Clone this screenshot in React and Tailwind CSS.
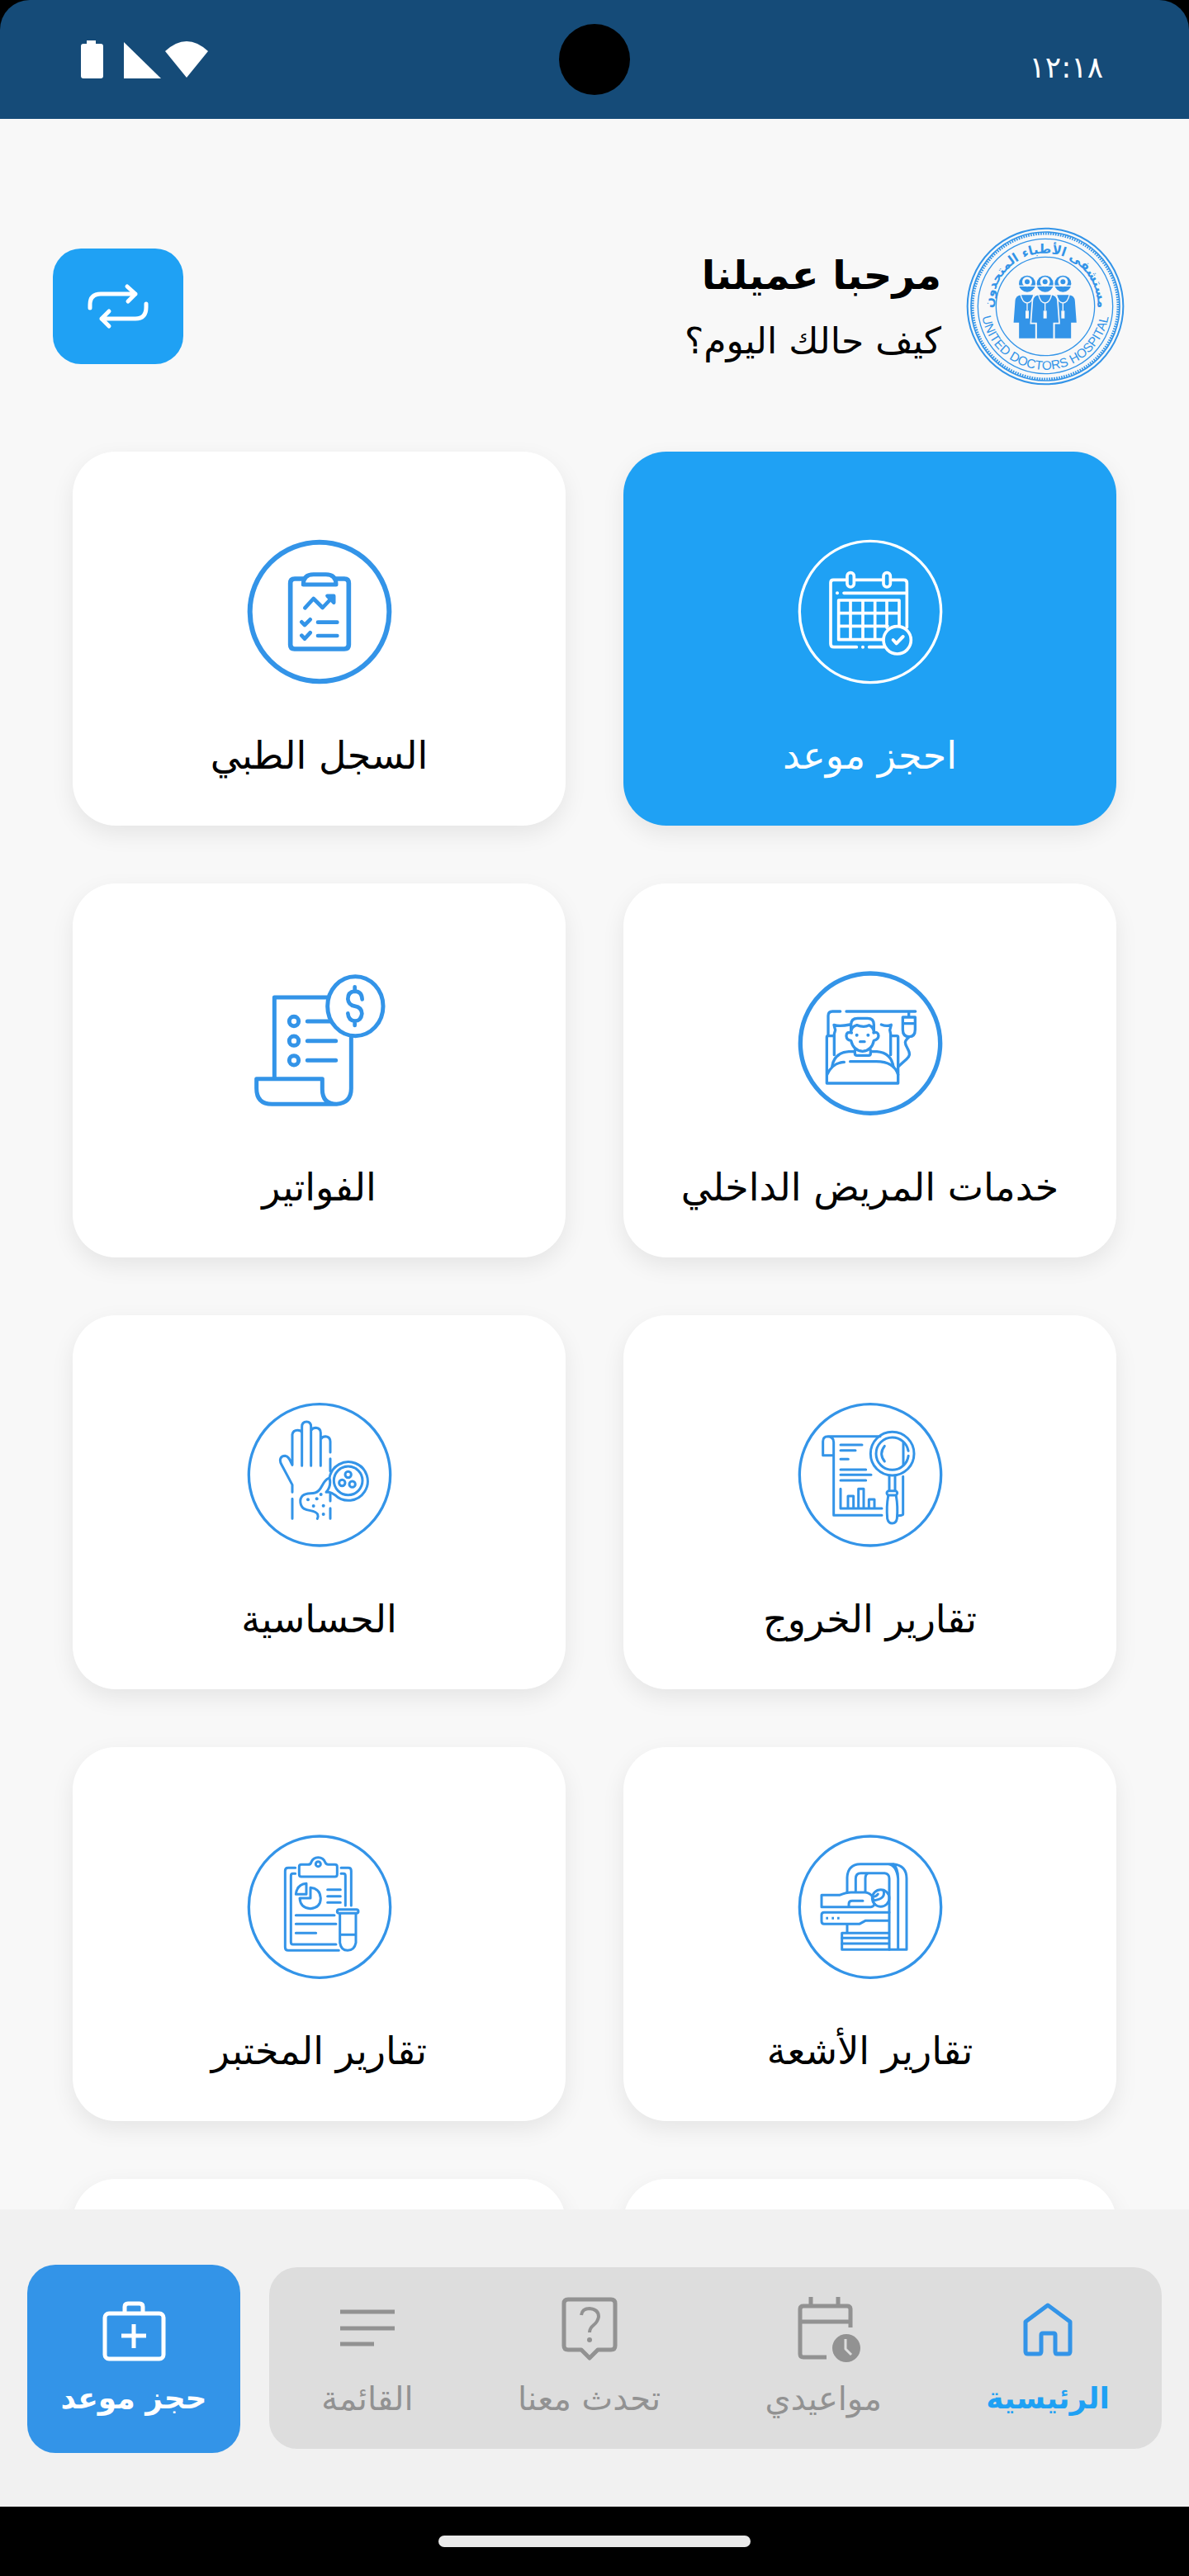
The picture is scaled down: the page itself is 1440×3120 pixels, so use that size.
import React from 'react';
import clsx from 'clsx';

const LineIcon = ({ viewBox, ring = 9, cx = 342, cy, stroke = 9, children }) => (
  <svg
    viewBox={viewBox}
    className="w-44 h-44"
    fill="none"
    stroke="currentColor"
    strokeWidth={stroke}
    strokeLinecap="round"
    strokeLinejoin="round"
    aria-hidden="true"
  >
    {cy && <circle cx={cx} cy={cy} r={262 - ring / 2} strokeWidth={ring} />}
    {children}
  </svg>
);

const BookingIcon = () => (
  <LineIcon viewBox="78 68 528 528" cy={332} ring={10} stroke={11}>
    <path d="M254 216H208Q198 216 198 226V448Q198 460 210 460H292M338 460H390M288 216H385M420 216H464Q475 216 475 227V388M246 264H474" />
    <rect x="258" y="190" width="25" height="52" rx="12" />
    <rect x="390" y="190" width="25" height="52" rx="12" />
    <path d="M388 433H227V290H447V380M227 337H447M227 384H405M270 290V433M315 290V433M359 290V433M402 290V390" />
    <circle cx="440" cy="435" r="50" />
    <path d="M425 434L437 447L461 422" strokeWidth="12" />
    <circle cx="222" cy="264" r="6" fill="currentColor" stroke="none" />
    <circle cx="315" cy="460" r="6" fill="currentColor" stroke="none" />
  </LineIcon>
);

const RecordIcon = () => (
  <LineIcon viewBox="58 68 528 528" cx={322} cy={332} ring={18} stroke={17}>
    <path d="M264 212H232Q216 212 216 228V452Q216 467 231 467H412Q428 467 428 452V228Q428 212 412 212H382" />
    <path d="M263 233H382Q382 196 345 196H300Q263 196 263 233Z" strokeWidth="15" />
    <path d="M269 318L300 284L333 317L370 278" strokeWidth="14" />
    <path d="M350 274H374V299Z" strokeWidth="13" fill="currentColor" />
    <path d="M257 369L268 380L288 360M257 418L268 430L288 408M316 370H386M316 419H386" strokeWidth="14" />
  </LineIcon>
);

const InpatientIcon = () => (
  <LineIcon viewBox="80 47 528 528" cx={344} cy={310} ring={16} stroke={10}>
    <path d="M191 282V210Q191 194 207 194H235M257 194H508M484 198V212" />
    <path d="M462 215H507V260Q507 286 485 286Q462 286 462 260ZM463 238H506" />
    <path d="M484 288C468 302 468 308 478 326C492 350 486 358 476 367L446 394" />
    <path d="M212 283H190Q186 283 186 288V455H445V288Q445 283 440 283H420" />
    <path d="M213 352V276L217 262L212 243Q232 250 270 242M384 242Q404 250 420 243L415 262L418 276V352" />
    <path d="M274 270V242Q274 219 298 219H334Q357 219 357 242V270Q357 252 340 244Q322 254 295 244Q274 250 274 270Z" />
    <path d="M276 272Q256 266 257 284Q258 298 274 300Q282 336 316 339Q350 336 357 300Q374 296 374 282Q372 266 356 272" />
    <path d="M288 335V346Q288 354 296 354H338Q345 354 345 346V335M288 340H266Q212 344 205 396M345 340H368Q420 344 428 396" />
    <path d="M187 424Q206 380 249 378M271 376H366Q430 376 445 424" />
    <path d="M307 304H323" />
    <circle cx="295" cy="280" r="6" fill="currentColor" stroke="none" />
    <circle cx="336" cy="280" r="6" fill="currentColor" stroke="none" />
  </LineIcon>
);

const InvoiceIcon = () => (
  <LineIcon viewBox="57 48 528 528" stroke={15}>
    <path d="M350 144H157V438M92 440H331V478Q331 532 383 532Q436 528 436 475V290M92 440V475Q92 532 148 532H383M277 231H360M277 302H380M277 373H380" />
    <circle cx="228" cy="231" r="17" />
    <circle cx="228" cy="302" r="17" />
    <circle cx="228" cy="373" r="17" />
    <ellipse cx="451" cy="176" rx="101" ry="108" />
    <path d="M449 106V122M449 230V246M476 151Q474 122 449 122Q424 124 424 150Q426 172 449 176Q474 180 475 203Q472 229 449 230Q426 228 424 202" strokeWidth="14" />
  </LineIcon>
);

const DischargeIcon = () => (
  <LineIcon viewBox="80 57 528 528" cx={344} cy={319} ring={10}>
    <path d="M380 179H190Q172 179 172 197V248H210M190 179Q211 181 211 200V466H386M463 325V462Q463 467 446 467" />
    <path d="M236 210H314M236 230H290M236 262H264M236 300H328M236 319H347M236 339H328" />
    <path d="M236 370V441H386M263 440V396H283V440M301 440V370H320V440M339 440V408H359V440" />
    <circle cx="424" cy="242" r="79" />
    <circle cx="424" cy="242" r="59" strokeDasharray="350 21" strokeDashoffset="-8" />
    <path d="M464 200V284M396 214Q374 242 396 270" />
    <path d="M413 325V374M434 325V374" />
    <rect x="404" y="377" width="38" height="16" rx="8" />
    <path d="M409 396Q402 435 406 478Q410 495 424 495Q438 495 441 478Q445 435 438 396" />
  </LineIcon>
);

const AllergyIcon = () => (
  <LineIcon viewBox="58 57 528 528" cx={322} cy={319} ring={10}>
    <path d="M223 382V355L184 282C174 264 180 250 197 250C211 252 214 266 223 283V172Q226 157 242 157Q254 157 258 164V286M258 164V144Q258 126 275 126Q291 126 291 144V286M291 158Q296 148 309 148Q326 150 326 166V286M326 190Q332 179 344 179Q361 181 361 198V237" />
    <path d="M361 260V305M361 388V414M361 440V478M223 406V478" />
    <path d="M354 332C330 342 332 378 306 384C290 388 274 384 261 394C246 408 252 434 266 442C284 452 306 446 315 462Q318 470 314 478" />
    <path d="M356 382H346Q366 360 358 330A70 70 0 1 1 378 392Q366 384 356 382Z" />
    <circle cx="426" cy="340" r="52" />
    <circle cx="426" cy="318" r="11" />
    <circle cx="404" cy="348" r="11" />
    <circle cx="441" cy="353" r="11" />
    {[[280, 409], [312, 406], [327, 390], [300, 432], [336, 431], [336, 462]].map(([x, y]) => (
      <circle key={`${x}-${y}`} cx={x} cy={y} r="6" fill="currentColor" stroke="none" />
    ))}
  </LineIcon>
);

const RadiologyIcon = () => (
  <LineIcon viewBox="80 66 528 528" cx={344} cy={329} ring={10}>
    <path d="M260 274V222Q262 174 308 173H428Q476 178 476 226V484H241V424H412M428 173Q445 190 445 226V484M410 173Q440 178 445 226" />
    <path d="M291 274V226Q291 206 310 206H396Q413 208 413 226V484M326 274V226Q326 206 340 206" />
    <path d="M167 286H232Q258 276 274 276H326Q344 278 352 292M167 286V329H346Q356 328 360 318M266 327V318Q266 307 278 307H317" />
    <circle cx="382" cy="297" r="31" />
    <path d="M392 268C398 290 388 300 356 306L352 292Q366 292 372 282" />
    <path d="M413 349H176Q167 349 167 358V381Q167 391 176 391H304L326 379H412M260 392V420M241 442H412M241 462H412" />
    <path d="M183 370H191M204 370H212M224 370H232" strokeLinecap="butt" />
  </LineIcon>
);

const LabIcon = () => (
  <LineIcon viewBox="58 66 528 528" cx={322} cy={329} ring={10}>
    <path d="M234 187H208Q197 187 197 198V475Q197 487 208 487H392M400 187H427Q437 187 437 198V324" />
    <path d="M234 208H225Q218 208 218 216V457Q218 465 225 465H382M400 208H409Q416 208 416 216V324" />
    <path d="M256 175H280Q290 175 292 166Q298 149 317 149Q336 149 342 166Q345 175 354 175H378Q386 175 386 183V211Q386 219 378 219H256Q248 219 248 211V183Q248 175 256 175Z" />
    <circle cx="317" cy="173" r="9" />
    <path d="M274 244V283H236Q240 247 274 244ZM289 259V297H250Q252 333 289 335Q326 332 326 297Q324 262 289 259Z" />
    <path d="M351 266H398M351 290H398M351 313H398M236 359H376M236 391H382M236 424H309" />
    <rect x="386" y="338" width="77" height="14" rx="7" />
    <path d="M396 354V459Q400 487 424 487Q449 486 454 459V354M397 430H453" />
  </LineIcon>
);

const HospitalLogo = () => (
  <svg viewBox="58 46 576 576" className="w-48 h-48 text-[#3394e8]" fill="none" stroke="currentColor" direction="ltr" role="img" aria-label="United Doctors Hospital">
    <defs>
      <path id="logo-top" d="M160 370A190 190 0 1 1 532 370" />
      <path id="logo-bottom" d="M114 310A233 233 0 1 0 578 310" />
    </defs>
    <circle cx="346" cy="334" r="283" strokeWidth="6" />
    <circle cx="346" cy="334" r="270" strokeWidth="5" />
    <circle cx="346" cy="334" r="264" strokeWidth="9" strokeDasharray="5 4" />
    <circle cx="346" cy="334" r="245" strokeWidth="4" />
    <circle cx="346" cy="334" r="179" strokeWidth="4" />
    <g fill="currentColor" stroke="none">
      <text fontSize="46" fontWeight="700" textAnchor="middle" fontFamily="DejaVu Sans, sans-serif">
        <textPath href="#logo-top" startOffset="50%">مستشفى الأطباء المتحدون</textPath>
      </text>
      <text fontSize="46" textAnchor="middle" fontFamily="Liberation Sans, sans-serif">
        <textPath href="#logo-bottom" startOffset="50%">UNITED DOCTORS HOSPITAL</textPath>
      </text>
    </g>
    {[280, 410, 345].map((x) => (
      <g key={x} transform={`translate(${x} 0)`}>
        <path
          d="M-22 290Q-44 292 -46 314L-52 396H-32V453H32V396H52L46 314Q44 292 22 290Z"
          fill="currentColor"
          stroke="#f8f8f8"
          strokeWidth="5"
        />
        <circle cx="0" cy="252" r="30" fill="currentColor" stroke="none" />
        <circle cx="0" cy="245" r="18" fill="#f8f8f8" stroke="none" />
        <circle cx="0" cy="245" r="9" fill="currentColor" stroke="none" />
        <path d="M-30 260H30" stroke="#f8f8f8" strokeWidth="4" />
        <path d="M-24 290Q-18 320 0 322Q18 320 24 290M0 322V350" stroke="#f8f8f8" strokeWidth="4" />
        <rect x="-6" y="350" width="12" height="28" fill="#f8f8f8" stroke="none" />
      </g>
    ))}
  </svg>
);

const NavSvg = ({ children }) => (
  <svg viewBox="0 0 80 80" className="w-20 h-20 overflow-visible" fill="none" stroke="currentColor" strokeWidth="5" strokeLinejoin="round" aria-hidden="true">
    {children}
  </svg>
);

const HomeIcon = () => (
  <NavSvg>
    <path stroke="#3394e8" d="M40 11L67 31V67Q67 70 64 70H51Q49 70 49 67V47Q49 45 47 45H34Q32 45 32 47V67Q32 70 29 70H16Q13 70 13 67V31Z" />
  </NavSvg>
);

const CalendarIcon = () => (
  <NavSvg>
    <path d="M25 1V12M58 1V12M44 74H16Q12 74 12 70V16Q12 12 16 12H69Q73 12 73 16V38M12 31H73" />
    <circle cx="68" cy="63" r="17" fill="currentColor" stroke="none" />
    <path d="M67 52V64L74 71" stroke="#ddd" strokeWidth="3" />
  </NavSvg>
);

const ChatIcon = () => (
  <NavSvg>
    <path d="M14 4H66Q71 4 71 9V60Q71 65 66 65H50L40 75L30 65H14Q9 65 9 60V9Q9 4 14 4Z" />
    <path d="M30 23Q31 15 40 15Q51 16 51 25Q50 31 45 35Q40 39 40 44" strokeWidth="4" />
    <circle cx="40" cy="53" r="3" fill="currentColor" stroke="none" />
  </NavSvg>
);

const MenuIcon = () => (
  <NavSvg>
    <path d="M7 19H73M7 39H73M7 58H48" />
  </NavSvg>
);

const BagIcon = () => (
  <NavSvg>
    <rect x="5" y="21" width="71" height="55" rx="5" />
    <path d="M29 20V13Q29 9 33 9H47Q51 9 51 13V20M40 34V63M25 48H55" />
  </NavSvg>
);

const services = [
  { id: 'book', label: 'احجز موعد', Icon: BookingIcon, primary: true },
  { id: 'record', label: 'السجل الطبي', Icon: RecordIcon },
  { id: 'inpatient', label: 'خدمات المريض الداخلي', Icon: InpatientIcon },
  { id: 'invoices', label: 'الفواتير', Icon: InvoiceIcon },
  { id: 'discharge', label: 'تقارير الخروج', Icon: DischargeIcon },
  { id: 'allergy', label: 'الحساسية', Icon: AllergyIcon },
  { id: 'radiology', label: 'تقارير الأشعة', Icon: RadiologyIcon },
  { id: 'lab', label: 'تقارير المختبر', Icon: LabIcon },
];

const navItems = [
  { id: 'home', label: 'الرئيسية', Icon: HomeIcon, active: true },
  { id: 'appointments', label: 'مواعيدي', Icon: CalendarIcon },
  { id: 'chat', label: 'تحدث معنا', Icon: ChatIcon },
  { id: 'menu', label: 'القائمة', Icon: MenuIcon },
];

const StatusBar = () => (
  <div className="bg-black">
    <div className="relative flex h-36 items-center justify-between rounded-t-[36px] bg-[#154b78] pr-[104px] pl-[96px] text-white">
      <span className="pt-5 text-[36px] leading-[48px]">١٢:١٨</span>
      <svg viewBox="0 0 156 48" className="h-12 w-[156px]" fill="currentColor" aria-hidden="true">
        <path d="M9 1H20V5H26Q29 5 29 8V44Q29 47 26 47H5Q2 47 2 44V8Q2 5 5 5H9Z" />
        <path d="M54 3L99 47H54Z" />
        <path d="M104 14Q130 -10 156 14L130 46Z" />
      </svg>
      <div className="absolute top-[29px] left-1/2 size-[86px] -translate-x-1/2 rounded-full bg-black" />
    </div>
  </div>
);

const ServiceCard = ({ label, Icon, primary }) => (
  <button
    type="button"
    className={clsx(
      'flex h-[453px] flex-col items-center rounded-[52px] pt-[106px] shadow-[0_10px_28px_rgba(0,0,0,0.08)]',
      primary ? 'bg-[#1fa1f4] text-white' : 'bg-white text-[#3394e8]'
    )}
  >
    <Icon />
    <span className={clsx('mt-[56px] text-[46px] leading-[60px] whitespace-nowrap', primary ? 'text-white' : 'text-black')}>
      {label}
    </span>
  </button>
);

const App = () => {
  return (
    <div dir="rtl" className="flex h-screen flex-col bg-[#f8f8f8] font-['DejaVu_Sans',sans-serif]">
      <StatusBar />

      <main className="min-h-0 flex-1 overflow-hidden">
        <header className="flex items-center justify-between pt-[131px] pr-[78px] pl-16">
          <div className="flex items-center gap-[30px]">
            <HospitalLogo />
            <div className="pt-1">
              <h1 className="text-[48px] leading-[80px] font-bold">مرحبا عميلنا</h1>
              <p className="text-[44px] leading-[80px]">كيف حالك اليوم؟</p>
            </div>
          </div>
          <button
            type="button"
            aria-label="تبديل"
            className="flex h-[140px] w-[158px] items-center justify-center rounded-[34px] bg-[#1fa1f4] text-white"
          >
            <svg viewBox="0 0 76 56" className="h-14 w-[76px]" fill="none" stroke="currentColor" strokeWidth="5" strokeLinecap="round" strokeLinejoin="round" aria-hidden="true">
              <path d="M4 30V26Q4 13 17 13H59M49 4L59 13L50 22M72 25V29Q72 43 59 43H18M27 34L18 43L27 52" />
            </svg>
          </button>
        </header>

        <section className="mt-20 grid grid-cols-2 gap-[70px] px-[88px]">
          {services.map((service) => (
            <ServiceCard key={service.id} {...service} />
          ))}
          <div className="h-[453px] rounded-[52px] bg-white shadow-[0_10px_28px_rgba(0,0,0,0.08)]" />
          <div className="h-[453px] rounded-[52px] bg-white shadow-[0_10px_28px_rgba(0,0,0,0.08)]" />
        </section>
      </main>

      <footer className="relative flex h-[360px] items-start gap-[35px] bg-[#f1f1f1] px-[33px] pt-[67px]">
        <nav className="mt-[3px] flex h-[220px] flex-1 justify-around rounded-[34px] bg-[#ddd] pt-[35px]">
          {navItems.map(({ id, label, Icon, active }) => (
            <a
              key={id}
              href={`#${id}`}
              className={clsx('flex flex-col items-center', active ? 'text-[#1fa1f4]' : 'text-[#929292]')}
            >
              <Icon />
              <span
                className={clsx(
                  'mt-4 leading-[56px] whitespace-nowrap',
                  active ? 'text-[36px] font-bold' : 'text-[40px]'
                )}
              >
                {label}
              </span>
            </a>
          ))}
        </nav>
        <button
          type="button"
          className="flex h-[228px] w-[258px] flex-col items-center rounded-[34px] bg-[#3394e8] pt-[38px] text-white"
        >
          <BagIcon />
          <span className="mt-4 text-[36px] leading-[56px] font-bold whitespace-nowrap">حجز موعد</span>
        </button>
      </footer>

      <div className="flex h-[84px] items-center justify-center bg-black">
        <div className="h-[14px] w-[378px] rounded-full bg-[#eaeaea]" />
      </div>
    </div>
  );
};

export default App;
